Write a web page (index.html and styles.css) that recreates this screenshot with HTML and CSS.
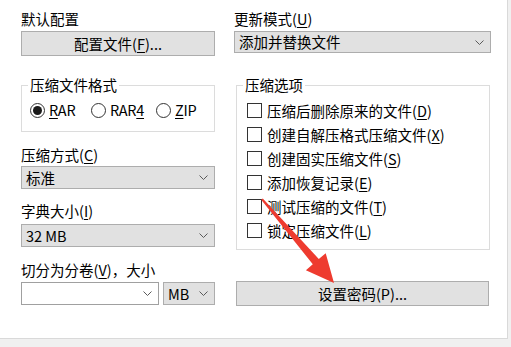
FILE: index.html
```html
<!DOCTYPE html>
<html lang="zh-CN">

<head>
    <meta charset="UTF-8">
    <title>压缩文件名和参数</title>
    <link rel="stylesheet" href="styles.css">
</head>

<body>
    <div class="panel">
        <!-- left column -->
        <div class="col left-col">
            <div class="label first">默认配置</div>
            <button class="btn">配置文件(<u>F</u>)...</button>

            <fieldset class="group format-group">
                <legend>压缩文件格式</legend>
                <div class="radios">
                    <span class="radio rar"><i class="circle checked"></i><span><u>R</u>AR</span></span>
                    <span class="radio rar4"><i class="circle"></i><span>RAR<u>4</u></span></span>
                    <span class="radio"><i class="circle"></i><span><u>Z</u>IP</span></span>
                </div>
            </fieldset>

            <div class="label">压缩方式(<u>C</u>)</div>
            <div class="select method">
                <span>标准</span>
                <svg class="chevron" width="9" height="5" viewBox="0 0 9 5"><path d="M0.5 0.5 L4.5 4.5 L8.5 0.5" /></svg>
            </div>

            <div class="label dict-label">字典大小(<u>I</u>)</div>
            <div class="select dict">
                <span>32 MB</span>
                <svg class="chevron" width="9" height="5" viewBox="0 0 9 5"><path d="M0.5 0.5 L4.5 4.5 L8.5 0.5" /></svg>
            </div>

            <div class="label split-label">切分为分卷(<u>V</u>)，大小</div>
            <div class="split">
                <div class="select input">
                    <span></span>
                    <svg class="chevron" width="9" height="5" viewBox="0 0 9 5"><path d="M0.5 0.5 L4.5 4.5 L8.5 0.5" /></svg>
                </div>
                <div class="select unit">
                    <span>MB</span>
                    <svg class="chevron" width="9" height="5" viewBox="0 0 9 5"><path d="M0.5 0.5 L4.5 4.5 L8.5 0.5" /></svg>
                </div>
            </div>
        </div>

        <!-- right column -->
        <div class="col right-col">
            <div class="label first">更新模式(<u>U</u>)</div>
            <div class="select update">
                <span>添加并替换文件</span>
                <svg class="chevron" width="9" height="5" viewBox="0 0 9 5"><path d="M0.5 0.5 L4.5 4.5 L8.5 0.5" /></svg>
            </div>

            <fieldset class="group options-group">
                <legend>压缩选项</legend>
                <div class="check"><i class="box"></i><span>压缩后删除原来的文件(<u>D</u>)</span></div>
                <div class="check"><i class="box"></i><span>创建自解压格式压缩文件(<u>X</u>)</span></div>
                <div class="check"><i class="box"></i><span>创建固实压缩文件(<u>S</u>)</span></div>
                <div class="check"><i class="box"></i><span>添加恢复记录(<u>E</u>)</span></div>
                <div class="check"><i class="box"></i><span>测试压缩的文件(<u>T</u>)</span></div>
                <div class="check"><i class="box"></i><span>锁定压缩文件(<u>L</u>)</span></div>
            </fieldset>

            <button class="btn password">设置密码(P)...</button>
        </div>

        <!-- red annotation arrow -->
        <svg class="arrow" width="511" height="347" viewBox="0 0 511 347">
            <polygon points="261.2,199.7 312.8,264.3 305.9,270.2 334,283 325.7,253.2 318.8,259.1 262.8,198.4" />
        </svg>
    </div>
</body>

</html>
```

FILE: styles.css
```css
body {
    margin: 0;
    background-color: #f0f0f0;
    font-family: "Noto Sans CJK SC", "Noto Sans", sans-serif;
    font-size: 14.5px;
    color: #000;
}

.panel {
    position: relative;
    width: 486px;
    height: 338px;
    padding-left: 21px;
    background-color: #fff;
    border-right: 1px solid #d9d9d9;
    border-bottom: 1px solid #d9d9d9;
    display: flex;
    gap: 20px;
}

.col {
    display: flex;
    flex-direction: column;
}

.left-col {
    width: 194px;
}

.right-col {
    width: 257px;
    margin-left: -1px;
}

.label {
    line-height: 16px;
    height: 16px;
    margin-top: 15px;
    white-space: nowrap;
}

.label.first {
    margin-top: 11px;
}

u {
    text-decoration: underline;
    text-underline-offset: 2px;
    text-decoration-thickness: 1px;
}

/* buttons */
.btn {
    font: inherit;
    color: #000;
    height: 25px;
    margin-top: 4px;
    padding: 0;
    background-color: #e1e1e1;
    border: 1px solid #adadad;
    line-height: 21px;
}

.btn.password {
    margin-top: 31px;
    margin-left: 2px;
    width: 253px;
}

/* drop-down boxes */
.select {
    box-sizing: border-box;
    height: 23px;
    margin-top: 3px;
    padding: 0 6px 0 4px;
    background-color: #e1e1e1;
    border: 1px solid #adadad;
    display: flex;
    align-items: center;
    justify-content: space-between;
    line-height: 20px;
    white-space: nowrap;
}

.select.update {
    height: 22px;
    margin-top: 4px;
}

.select.dict {
    margin-top: 5px;
}

.chevron {
    fill: none;
    stroke: #5a5a5a;
    stroke-width: 1;
}

.dict-label {
    margin-top: 14px;
}

.split {
    margin-top: 4px;
    display: flex;
    gap: 4px;
}

.split .select {
    margin-top: 0;
}

.select.input {
    width: 138px;
    background-color: #fff;
    border-color: #a0a0a0;
}

.select.unit {
    width: 52px;
}

/* group boxes */
.group {
    margin: 0;
    border: 1px solid #dcdcdc;
    min-width: 0;
}

.group legend {
    padding: 0 2px;
    line-height: 16px;
    height: 16px;
}

.format-group {
    margin-top: 21px;
    padding: 9px 0 13px 8px;
}

.format-group legend {
    margin-left: -2px;
}

.radios {
    display: flex;
    height: 16px;
    line-height: 16px;
    letter-spacing: -0.3px;
}

.radio {
    display: flex;
    align-items: center;
    gap: 4px;
}

.radio.rar {
    width: 61px;
}

.radio.rar4 {
    width: 65px;
}

.circle {
    box-sizing: border-box;
    width: 15px;
    height: 15px;
    border: 1px solid #333;
    border-radius: 50%;
    display: flex;
    align-items: center;
    justify-content: center;
}

.circle.checked::after {
    content: "";
    width: 9px;
    height: 9px;
    border-radius: 50%;
    background-color: #1a1a1a;
}

.options-group {
    margin-top: 24px;
    margin-left: 2px;
    margin-right: 1px;
    padding: 5px 0 7px 10px;
}

.options-group legend {
    margin-left: -4px;
}

.check {
    height: 24px;
    display: flex;
    align-items: center;
    gap: 5px;
    white-space: nowrap;
}

.box {
    box-sizing: border-box;
    width: 15px;
    height: 15px;
    border: 1px solid #333;
    background-color: #fff;
}

/* annotation */
.arrow {
    position: absolute;
    left: 0;
    top: 0;
    pointer-events: none;
}

.arrow polygon {
    fill: #ee3b2f;
}
```
